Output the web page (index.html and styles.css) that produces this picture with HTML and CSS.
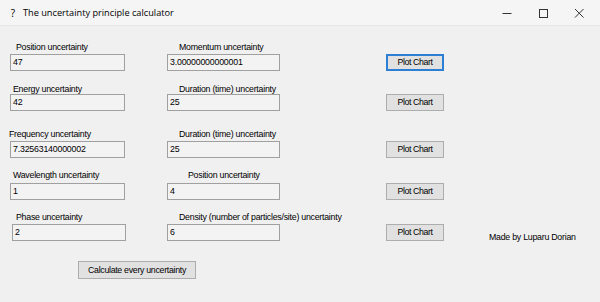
FILE: index.html
```html
<!DOCTYPE html>
<html>
<head>
<meta charset="utf-8">
<link rel="stylesheet" href="styles.css">
</head>
<body>
<div class="window">
  <div class="titlebar">
    <span class="qicon">?</span>
    <span class="title">The uncertainty principle calculator</span>
    <div class="controls">
      <span class="ctl"><svg width="10" height="10" viewBox="0 0 10 10"><path d="M0.5 5.5H9.5" stroke="#333" stroke-width="1"/></svg></span>
      <span class="ctl"><svg width="10" height="10" viewBox="0 0 10 10"><rect x="1.5" y="1.5" width="8" height="8" fill="none" stroke="#333" stroke-width="1"/></svg></span>
      <span class="ctl"><svg width="10" height="10" viewBox="0 0 10 10"><path d="M1 1L9.5 9.5M9.5 1L1 9.5" stroke="#333" stroke-width="1"/></svg></span>
    </div>
  </div>
  <div class="client">
    <div class="row r1">
      <div class="field"><div class="lbl in16">Position uncertainty</div><div class="box">47</div></div>
      <div class="field"><div class="lbl in12">Momentum uncertainty</div><div class="box">3.00000000000001</div></div>
      <div class="act"><button class="btn focus">Plot Chart</button></div>
    </div>
    <div class="row r2">
      <div class="field"><div class="lbl in3">Energy uncertainty</div><div class="box">42</div></div>
      <div class="field"><div class="lbl in12">Duration (time) uncertainty</div><div class="box">25</div></div>
      <div class="act"><button class="btn">Plot Chart</button></div>
    </div>
    <div class="row r3">
      <div class="field"><div class="lbl in-1">Frequency uncertainty</div><div class="box">7.32563140000002</div></div>
      <div class="field"><div class="lbl in12">Duration (time) uncertainty</div><div class="box">25</div></div>
      <div class="act"><button class="btn">Plot Chart</button></div>
    </div>
    <div class="row r4">
      <div class="field"><div class="lbl in3">Wavelength uncertainty</div><div class="box">1</div></div>
      <div class="field"><div class="lbl in21">Position uncertainty</div><div class="box">4</div></div>
      <div class="act"><button class="btn">Plot Chart</button></div>
    </div>
    <div class="row r5">
      <div class="field"><div class="lbl in6">Phase uncertainty</div><div class="box b5">2</div></div>
      <div class="field"><div class="lbl in12">Density (number of particles/site) uncertainty</div><div class="box">6</div></div>
      <div class="act"><button class="btn">Plot Chart</button></div>
      <div class="credit">Made by Luparu Dorian</div>
    </div>
    <div class="calc-row"><button class="btn calc">Calculate every uncertainty</button></div>
  </div>
</div>
</body>
</html>
```
FILE: styles.css
```css
* { box-sizing: border-box; }
html, body { margin: 0; padding: 0; }
body {
  width: 600px;
  height: 302px;
  overflow: hidden;
  background: #f0f0f0;
  font-family: "Liberation Sans", Arial, sans-serif;
  color: #000;
}
.window { width: 600px; height: 302px; display: flex; flex-direction: column; }
.titlebar {
  height: 26px;
  flex: none;
  background: #f5f5f5;
  border-bottom: 1px solid #e6e6e6;
  display: flex;
  align-items: center;
  font-family: "Open Sans", "Noto Sans", sans-serif;
  font-size: 9.2px;
  color: #000;
}
.qicon { width: 10px; margin-left: 8px; text-align: center; font-size: 10px; }
.title { margin-left: 5px; font-size: 9.2px; }
.controls { margin-left: auto; display: flex; }
.ctl { width: 36px; height: 25px; display: flex; align-items: center; justify-content: center; }
.controls .ctl:last-child { margin-right: 3px; }
.client { flex: 1; padding-left: 10px; background: #f0f0f0; }
.row {
  display: grid;
  grid-template-columns: 157px 219px 103px auto;
  align-items: end;
}
.field { display: flex; flex-direction: column; }
.lbl {
  height: 12px;
  line-height: 12px;
  font-size: 8.8px;
  letter-spacing: -0.25px;
  margin-bottom: 1px;
  white-space: nowrap;
}
.in16 { padding-left: 6px; }
.in12 { padding-left: 12px; }
.in3 { padding-left: 3px; }
.in6 { padding-left: 6px; }
.in-1 { padding-left: 0; margin-left: -1px; }
.in21 { padding-left: 21px; }
.box {
  width: 115px;
  height: 17px;
  border: 1px solid #a0a0a0;
  background: #f3f3f3;
  font-size: 8.8px;
  letter-spacing: -0.2px;
  line-height: 15px;
  padding-left: 2px;
  white-space: nowrap;
}
.field + .field .box { width: 113px; }
.b5 { margin-left: 2px; width: 114px; }
.r1 { margin-top: 15px; }
.r2 { margin-top: 12px; }
.r2 .lbl { margin-bottom: -1px; }
.r3 { margin-top: 17px; }
.r4 { margin-top: 11px; }
.r4 .lbl { margin-bottom: 2px; }
.r5 { margin-top: 11px; }
.act { display: flex; }
.btn {
  width: 58px;
  height: 17px;
  padding: 0;
  border: 1px solid #adadad;
  background: #e1e1e1;
  font-family: "Liberation Sans", Arial, sans-serif;
  font-size: 8.8px;
  letter-spacing: -0.4px;
  color: #000;
  line-height: 15px;
}
.btn.focus { border: 2px solid #2d7fd6; line-height: 13px; }
.credit { font-size: 8.8px; letter-spacing: -0.25px; line-height: 12px; margin-bottom: -2px; white-space: nowrap; }
.calc-row { margin-top: 20px; padding-left: 68px; display: flex; }
.btn.calc { width: 118px; height: 18px; line-height: 16px; letter-spacing: -0.3px; }
```
